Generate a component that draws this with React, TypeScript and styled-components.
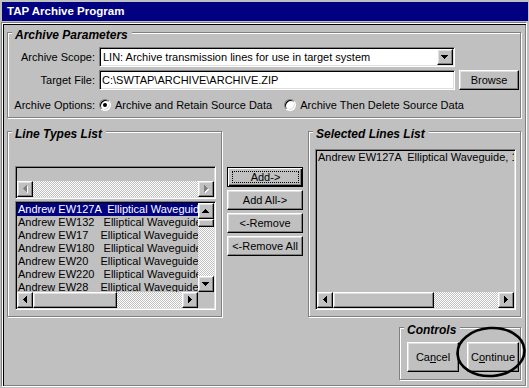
import React from "react";
import styled, { createGlobalStyle, css } from "styled-components";

const GlobalStyle = createGlobalStyle`
  html, body { margin: 0; padding: 0; background: #c0c0c0; }
  body {
    font-family: "Liberation Sans", Arial, sans-serif;
    font-size: 11px;
    color: #000;
  }
  * { box-sizing: border-box; }
`;

const raised = css`
  border: 1px solid;
  border-color: #fff #000 #000 #fff;
  box-shadow: inset -1px -1px #808080, inset 1px 1px #dfdfdf;
  background: #c0c0c0;
`;

const sunken = css`
  border: 1px solid;
  border-color: #808080 #fff #fff #808080;
  box-shadow: inset 1px 1px #000, inset -1px -1px #dfdfdf;
`;

const dither = css`
  background: repeating-conic-gradient(#c0c0c0 0% 25%, #fff 0% 50%) 0 0 / 2px 2px;
`;

const Window = styled.div`
  position: relative;
  width: 529px;
  height: 388px;
  background: #c0c0c0;
  display: flex;
  flex-direction: column;
  overflow: hidden;
`;

const TitleBar = styled.div`
  margin: 2px 1px 0 2px;
  height: 19px;
  background: #000080;
  color: #fff;
  font-weight: bold;
  font-size: 11.5px;
  line-height: 19px;
  padding-left: 5px;
`;

const Client = styled.div`
  flex: 1;
  margin: 1px 2px 1px 1px;
  border: 1px solid;
  border-color: #808080 #fff #fff #808080;
  box-shadow: inset 1px 1px #fff, inset 2px 2px #000, inset -1px -1px #808080;
  padding: 9px 5px 0 5px;
  display: flex;
  flex-direction: column;
`;

const Group = styled.div`
  position: relative;
  border: 1px solid #808080;
  box-shadow: inset 1px 1px #fff, 1px 1px #fff;
`;

const Legend = styled.span`
  position: absolute;
  top: -5px;
  left: 4px;
  padding: 0 4px 0 3px;
  background: #c0c0c0;
  font-style: italic;
  font-weight: bold;
  font-size: 12px;
  line-height: 14px;
  white-space: nowrap;
`;

const ParamGrid = styled.div`
  display: grid;
  grid-template-columns: 87px 356px 60px;
  grid-template-rows: 20px 20px 24px;
  column-gap: 4px;
  row-gap: 3px;
  padding-top: 14px;
  align-items: center;
`;

const FieldLabel = styled.span`
  text-align: right;
  white-space: nowrap;
`;

const Combo = styled.div`
  ${sunken};
  height: 20px;
  background: #fff;
  display: flex;
  padding: 1px;
`;

const ComboText = styled.span`
  flex: 1;
  min-width: 0;
  padding-left: 2px;
  line-height: 16px;
  white-space: nowrap;
  overflow: hidden;
`;

const DropButton = styled.span`
  ${raised};
  width: 16px;
  height: 16px;
  display: flex;
  align-items: center;
  justify-content: center;
  flex: none;
`;

const TextField = styled.div`
  ${sunken};
  height: 20px;
  background: #fff;
  padding: 1px 1px 1px 2px;
  line-height: 16px;
  white-space: nowrap;
  overflow: hidden;
`;

const Button = styled.div<{ $h?: number; $w?: number; $default?: boolean }>`
  ${raised};
  height: ${(p) => p.$h ?? 20}px;
  ${(p) => (p.$w ? `width: ${p.$w}px;` : "")}
  display: flex;
  align-items: center;
  justify-content: center;
  white-space: nowrap;
  ${(p) =>
    p.$default &&
    css`
      border: 1px solid #000;
      box-shadow: inset 1px 1px #fff, inset -1px -1px #000, inset -2px -2px #808080;
    `}
`;

const FocusLabel = styled.span`
  align-self: stretch;
  flex: 1;
  margin: 3px 3px 3px 4px;
  border: 1px dotted #000;
  display: flex;
  align-items: center;
  justify-content: center;
`;

const RadioRow = styled.div`
  grid-column: 2 / 4;
  display: flex;
  align-items: center;
  gap: 12px;
`;

const RadioOption = styled.label`
  display: flex;
  align-items: center;
  gap: 4px;
  white-space: nowrap;
`;

const RadioCircle = styled.span<{ $checked?: boolean }>`
  width: 12px;
  height: 12px;
  border-radius: 50%;
  background: #fff;
  border: 1px solid;
  border-color: #808080 #fff #fff #808080;
  box-shadow: inset 1px 1px #000, inset -1px -1px #dfdfdf;
  display: flex;
  align-items: center;
  justify-content: center;
  &::after {
    content: "";
    width: 4px;
    height: 4px;
    border-radius: 50%;
    background: ${(p) => (p.$checked ? "#000" : "transparent")};
  }
`;

const MiddleRow = styled.div`
  display: flex;
  gap: 5px;
  margin-top: 13px;
  height: 186px;
`;

const LineTypesGroup = styled(Group)`
  width: 215px;
  padding: 34px 5px 0 7px;
  display: flex;
  flex-direction: column;
  gap: 2px;
`;

const SelectedGroup = styled(Group)`
  width: 213px;
  padding: 17px 4px 0 6px;
`;

const ButtonColumn = styled.div`
  width: 76px;
  margin-top: 36px;
  display: flex;
  flex-direction: column;
  gap: 3px;
`;

const ListFrame = styled.div<{ $h: number; $vscroll?: boolean }>`
  ${sunken};
  width: 201px;
  height: ${(p) => p.$h}px;
  padding: 1px;
  background: #c0c0c0;
  display: grid;
  grid-template-columns: ${(p) => (p.$vscroll ? "minmax(0, 1fr) 16px" : "minmax(0, 1fr)")};
  grid-template-rows: minmax(0, 1fr) 16px;
`;

const Rows = styled.div`
  overflow: hidden;
`;

const Row = styled.div<{ $selected?: boolean }>`
  height: 13px;
  line-height: 13px;
  padding-left: 1px;
  white-space: pre;
  overflow: hidden;
  background: ${(p) => (p.$selected ? "#000080" : "transparent")};
  color: ${(p) => (p.$selected ? "#fff" : "#000")};
`;

const HScroll = styled.div`
  display: flex;
  height: 16px;
`;

const VScroll = styled.div`
  display: flex;
  flex-direction: column;
  width: 16px;
`;

const ScrollBtn = styled.div`
  ${raised};
  width: 16px;
  height: 16px;
  flex: none;
  display: flex;
  align-items: center;
  justify-content: center;
`;

const Thumb = styled.div<{ $w?: number; $h?: number }>`
  ${raised};
  flex: none;
  width: ${(p) => (p.$w ? `${p.$w}px` : "16px")};
  height: ${(p) => (p.$h ? `${p.$h}px` : "16px")};
`;

const Track = styled.div`
  flex: 1;
  ${dither};
`;

const Corner = styled.div`
  background: #c0c0c0;
`;

const ControlsRow = styled.div`
  display: flex;
  justify-content: flex-end;
  margin-top: 10px;
`;

const ControlsGroup = styled(Group)`
  width: 122px;
  height: 53px;
  padding: 14px 1px 0 7px;
  display: flex;
  gap: 8px;
`;

const Ellipse = styled.svg`
  position: absolute;
  left: 55px;
  top: -3px;
  overflow: visible;
  pointer-events: none;
`;

type Dir = "up" | "down" | "left" | "right";

function arrowRects(dir: Dir) {
  const r: { x: number; y: number; w: number; h: number }[] = [];
  for (let j = 0; j < 4; j++) {
    if (dir === "down") r.push({ x: j, y: j, w: 7 - 2 * j, h: 1 });
    if (dir === "up") r.push({ x: 3 - j, y: j, w: 2 * j + 1, h: 1 });
    if (dir === "left") r.push({ x: j, y: 3 - j, w: 1, h: 2 * j + 1 });
    if (dir === "right") r.push({ x: j, y: j, w: 1, h: 7 - 2 * j });
  }
  return r;
}

function Arrow({ dir, disabled }: { dir: Dir; disabled?: boolean }) {
  const vertical = dir === "up" || dir === "down";
  const w = vertical ? 7 : 4;
  const h = vertical ? 4 : 7;
  const rects = arrowRects(dir);
  return (
    <svg width={w + 1} height={h + 1} shapeRendering="crispEdges" style={{ display: "block" }}>
      {disabled &&
        rects.map((q, i) => (
          <rect key={"s" + i} x={q.x + 1} y={q.y + 1} width={q.w} height={q.h} fill="#fff" />
        ))}
      {rects.map((q, i) => (
        <rect key={i} x={q.x} y={q.y} width={q.w} height={q.h} fill={disabled ? "#808080" : "#000"} />
      ))}
    </svg>
  );
}

function HScrollBar({ thumb, disabled }: { thumb?: number; disabled?: boolean }) {
  return (
    <HScroll>
      <ScrollBtn>
        <Arrow dir="left" disabled={disabled} />
      </ScrollBtn>
      {thumb ? <Thumb $w={thumb} /> : null}
      <Track />
      <ScrollBtn>
        <Arrow dir="right" disabled={disabled} />
      </ScrollBtn>
    </HScroll>
  );
}

function VScrollBar({ thumb }: { thumb: number }) {
  return (
    <VScroll>
      <ScrollBtn>
        <Arrow dir="up" />
      </ScrollBtn>
      <Thumb $h={thumb} />
      <Track />
      <ScrollBtn>
        <Arrow dir="down" />
      </ScrollBtn>
    </VScroll>
  );
}

const lineTypes: [string, string][] = [
  ["Andrew EW127A", "Elliptical Waveguide, 12.2-13.25 GHz"],
  ["Andrew EW132", "Elliptical Waveguide, 11.7-13.25 GHz"],
  ["Andrew EW17", "Elliptical Waveguide, 1.7-2.3 GHz"],
  ["Andrew EW180", "Elliptical Waveguide, 17.7-19.7 GHz"],
  ["Andrew EW20", "Elliptical Waveguide, 1.9-2.7 GHz"],
  ["Andrew EW220", "Elliptical Waveguide, 21.2-23.6 GHz"],
  ["Andrew EW28", "Elliptical Waveguide, 2.5-2.9 GHz"],
];

const fmt = (a: string, b: string) => a.padEnd(15, " ") + b;

export default function App() {
  return (
    <>
      <GlobalStyle />
      <Window>
        <TitleBar>TAP Archive Program</TitleBar>
        <Client>
          <Group>
            <Legend>Archive Parameters</Legend>
            <ParamGrid>
              <FieldLabel>Archive Scope:</FieldLabel>
              <Combo>
                <ComboText>LIN: Archive transmission lines for use in target system</ComboText>
                <DropButton>
                  <Arrow dir="down" />
                </DropButton>
              </Combo>
              <span />
              <FieldLabel>Target File:</FieldLabel>
              <TextField>{"C:\\SWTAP\\ARCHIVE\\ARCHIVE.ZIP"}</TextField>
              <Button>Browse</Button>
              <FieldLabel>Archive Options:</FieldLabel>
              <RadioRow>
                <RadioOption>
                  <RadioCircle $checked />
                  Archive and Retain Source Data
                </RadioOption>
                <RadioOption>
                  <RadioCircle />
                  Archive Then Delete Source Data
                </RadioOption>
              </RadioRow>
            </ParamGrid>
          </Group>

          <MiddleRow>
            <LineTypesGroup>
              <Legend>Line Types List</Legend>
              <ListFrame $h={33}>
                <Rows />
                <HScrollBar disabled />
              </ListFrame>
              <ListFrame $h={109} $vscroll>
                <Rows>
                  {lineTypes.map(([a, b], i) => (
                    <Row key={a} $selected={i === 0}>
                      {fmt(a, b)}
                    </Row>
                  ))}
                </Rows>
                <VScrollBar thumb={8} />
                <HScrollBar thumb={84} />
                <Corner />
              </ListFrame>
            </LineTypesGroup>

            <ButtonColumn>
              <Button $default>
                <FocusLabel>Add-&gt;</FocusLabel>
              </Button>
              <Button>Add All-&gt;</Button>
              <Button>&lt;-Remove</Button>
              <Button>&lt;-Remove All</Button>
            </ButtonColumn>

            <SelectedGroup>
              <Legend>Selected Lines List</Legend>
              <ListFrame $h={161}>
                <Rows>
                  <Row>{fmt(lineTypes[0][0], lineTypes[0][1])}</Row>
                </Rows>
                <HScrollBar thumb={101} />
              </ListFrame>
            </SelectedGroup>
          </MiddleRow>

          <ControlsRow>
            <ControlsGroup>
              <Legend>Controls</Legend>
              <Button $w={52} $h={30}>
                Ca<u>n</u>cel
              </Button>
              <Button $w={52} $h={30}>
                C<u>o</u>ntinue
              </Button>
              <Ellipse width="72" height="54" viewBox="0 0 72 54">
                <ellipse
                  cx="36"
                  cy="27"
                  rx="33.5"
                  ry="24"
                  fill="none"
                  stroke="#000"
                  strokeWidth="2.6"
                  transform="rotate(-4 36 27)"
                />
              </Ellipse>
            </ControlsGroup>
          </ControlsRow>
        </Client>
      </Window>
    </>
  );
}
